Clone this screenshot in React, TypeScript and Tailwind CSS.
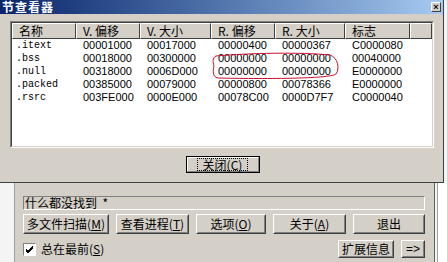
import React from 'react';

const CJK = '"Noto Sans CJK SC", "Liberation Sans", sans-serif';

const rows = [
  ['.itext', '00001000', '00017000', '00000400', '00000367', 'C0000080'],
  ['.bss', '00018000', '00300000', '00000000', '00000000', '00040000'],
  ['.null', '00318000', '0006D000', '00000000', '00000000', 'E0000000'],
  ['.packed', '00385000', '00079000', '00000800', '00078366', 'E0000000'],
  ['.rsrc', '003FE000', '0000E000', '00078C00', '0000D7F7', 'C0000040'],
];

const headers = ['名称', 'V. 偏移', 'V. 大小', 'R. 偏移', 'R. 大小', '标志', ''];

function Btn({ w, h, children, def }: { w: number; h: number; children: React.ReactNode; def?: boolean }) {
  return (
    <div
      className={`flex items-center justify-center bg-[#d4d0c8] text-[12px] leading-none text-black ${
        def
          ? 'border border-black'
          : 'border border-t-white border-l-white border-r-[#404040] border-b-[#404040]'
      }`}
      style={{ width: w, height: h, fontFamily: CJK }}
    >
      <div
        className={`w-full h-full flex items-center justify-center ${
          def
            ? 'border border-t-white border-l-white border-r-[#808080] border-b-[#808080]'
            : 'border border-t-[#d4d0c8] border-l-[#d4d0c8] border-r-[#808080] border-b-[#808080]'
        }`}
      >
        {children}
      </div>
    </div>
  );
}

function SectionList() {
  return (
    <div className="relative ml-[10px] mt-[7px] w-[424px] h-[127px] border border-t-[#808080] border-l-[#808080] border-r-white border-b-white">
      <div className="w-full h-full bg-white border border-t-[#404040] border-l-[#404040] border-r-[#d4d0c8] border-b-[#d4d0c8] overflow-hidden">
        <div className="grid grid-cols-[64px_64px_71px_64px_70px_65px_1fr] h-[16px]">
          {headers.map((h, i) => (
            <div
              key={i}
              className="bg-[#d4d0c8] border border-t-white border-l-white border-r-[#404040] border-b-[#404040] flex items-center pl-[6px] text-[12px] leading-none"
              style={{ fontFamily: CJK }}
            >
              {h}
            </div>
          ))}
        </div>
        {rows.map((r) => (
          <div key={r[0]} className="grid grid-cols-[64px_64px_71px_64px_70px_65px_1fr] h-[13px] items-center">
            <div className="pl-[4px] text-[10px] leading-none" style={{ fontFamily: '"Liberation Mono", monospace' }}>
              {r[0]}
            </div>
            {r.slice(1).map((c, i) => (
              <div key={i} className="pl-[7px] text-[11px] leading-none" style={{ fontFamily: '"Liberation Sans", sans-serif' }}>
                {c}
              </div>
            ))}
          </div>
        ))}
      </div>
      <svg className="absolute left-[-11px] top-[-22px] pointer-events-none" width="444" height="130">
        <path
          d="M 216 56 C 250 53, 300 52, 330 55 C 338 58, 340 68, 336 74 C 330 79, 260 79, 218 78 C 212 77, 213 70, 214 66 C 213 62, 212 58, 216 56 Z"
          fill="none"
          stroke="#c8102e"
          strokeWidth="1"
        />
      </svg>
    </div>
  );
}

export default function App() {
  return (
    <div className="w-[447px] h-[262px] bg-[#f4f4f4] overflow-hidden select-none">
      <div className="w-[444px] h-[183px] bg-[#d4d0c8] border-r border-b border-r-[#404040] border-b-[#404040] flex flex-col">
        <div className="h-[14px] flex items-center justify-between bg-gradient-to-r from-[#0a246a] to-[#a6caf0] pl-[2px] pr-[2px]">
          <span className="text-white font-bold text-[12px] leading-[14px] tracking-[1px]" style={{ fontFamily: CJK }}>
            节查看器
          </span>
          <div className="w-[10px] h-[10px] bg-[#d4d0c8] border border-t-white border-l-white border-r-[#404040] border-b-[#404040] flex items-center justify-center text-[9px] leading-none font-bold" style={{ fontFamily: '"Liberation Sans", sans-serif' }}>
            ×
          </div>
        </div>
        <SectionList />
        <div className="flex justify-center mt-[8px] ml-[2px]">
          <Btn w={74} h={17} def>
            <span className="border border-dotted border-black px-[5px] leading-[11px]">关闭(C)</span>
          </Btn>
        </div>
      </div>
      <div className="flex h-[79px]">
        <div className="w-[15px] border-r border-r-[#a0a0a0]" />
        <div className="w-[420px] bg-[#d4d0c8] border-r border-r-[#606060] pl-[8px] pt-[13px] flex flex-col" style={{ fontFamily: CJK }}>
          <div className="w-[402px] h-[14px] border border-t-[#808080] border-l-[#808080] border-r-white border-b-white text-[12px] leading-none flex items-center pl-[1px]">
            什么都没找到&nbsp;&nbsp;*
          </div>
          <div className="flex gap-[7px] mt-[4px]">
            <Btn w={86} h={20}>多文件扫描(<u>M</u>)</Btn>
            <Btn w={73} h={20}>查看进程(<u>T</u>)</Btn>
            <Btn w={70} h={20}>选项(<u>O</u>)</Btn>
            <Btn w={73} h={20}>关于(<u>A</u>)</Btn>
            <Btn w={72} h={20}>退出</Btn>
          </div>
          <div className="flex items-center mt-[6px] w-[402px]">
            <div className="w-[13px] h-[13px] bg-white border border-t-[#808080] border-l-[#808080] border-r-white border-b-white flex items-center justify-center">
              <svg width="9" height="9" viewBox="0 0 9 9">
                <path d="M1 4 L3 6 L8 1 M1 5 L3 7 L8 2 M1 6 L3 8 L8 3" stroke="black" strokeWidth="1" fill="none" />
              </svg>
            </div>
            <span className="ml-[5px] text-[12px] leading-none">总在最前(<u>S</u>)</span>
            <div className="ml-auto flex gap-[7px]">
              <Btn w={56} h={18}>扩展信息</Btn>
              <Btn w={24} h={18}>
                <span style={{ fontFamily: '"Liberation Sans", sans-serif' }}>=&gt;</span>
              </Btn>
            </div>
          </div>
        </div>
        <div className="w-[2px] bg-[#f4f4f4]" />
        <div className="w-[1px] bg-[#a0a0a0]" />
        <div className="flex-1 bg-white" />
      </div>
    </div>
  );
}
